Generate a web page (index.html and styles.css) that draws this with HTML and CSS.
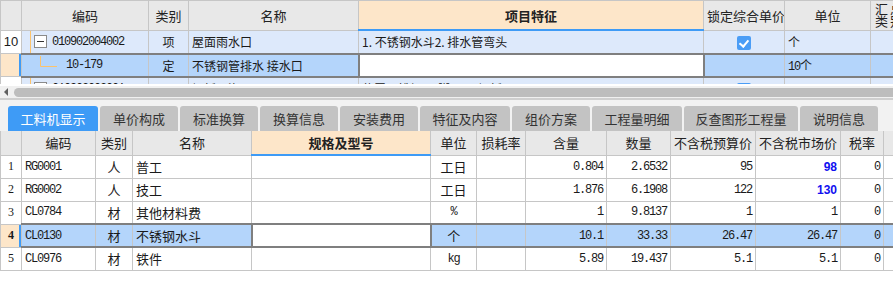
FILE: index.html
```html
<!DOCTYPE html>
<html lang="zh">
<head>
    <meta charset="UTF-8">
    <title>分部分项</title>
    <link rel="stylesheet" href="styles.css">
</head>
<body>

    <!-- 清单/定额表 -->
    <div class="top-grid">
        <table class="grid grid-top">
            <colgroup>
                <col style="width:21px"><col style="width:127px"><col style="width:40px"><col style="width:170px">
                <col style="width:345px"><col style="width:81px"><col style="width:86px"><col style="width:40px">
            </colgroup>
            <thead>
                <tr>
                    <th class="rn"></th>
                    <th>编码</th>
                    <th>类别</th>
                    <th>名称</th>
                    <th class="hl">项目特征</th>
                    <th>锁定综合单价</th>
                    <th>单位</th>
                    <th class="wrap">汇总类别</th>
                </tr>
            </thead>
            <tbody>
                <tr class="qd">
                    <td class="rn">10</td>
                    <td class="code">
                        <svg class="tree" width="28" height="22" viewBox="0 0 28 22">
                            <line x1="8.5" y1="0" x2="8.5" y2="22" stroke="#fcc36c"/>
                            <rect x="12.5" y="4.5" width="12" height="12" fill="#fff" stroke="#8a8a8a"/>
                            <line x1="15" y1="10.5" x2="22" y2="10.5" stroke="#333"/>
                        </svg><span class="mono">010902004002</span>
                    </td>
                    <td class="c">项</td>
                    <td>屋面雨水口</td>
                    <td>1. 不锈钢水斗2. 排水管弯头</td>
                    <td class="c"><span class="check"></span></td>
                    <td>个</td>
                    <td></td>
                </tr>
                <tr class="sel">
                    <td class="rn cur"></td>
                    <td class="code">
                        <svg class="tree" width="40" height="19" viewBox="0 0 40 19">
                            <polyline points="18.5,0 18.5,10.5 35,10.5" fill="none" stroke="#fcc36c"/>
                        </svg><span class="mono">10-179</span>
                    </td>
                    <td class="c">定</td>
                    <td>不锈钢管排水 接水口</td>
                    <td class="edit"></td>
                    <td></td>
                    <td><span class="mono">10</span>个</td>
                    <td></td>
                </tr>
                <tr class="qd">
                    <td class="rn">11</td>
                    <td class="code">
                        <svg class="tree" width="28" height="22" viewBox="0 0 28 22">
                            <line x1="8.5" y1="0" x2="8.5" y2="22" stroke="#fcc36c"/>
                            <rect x="12.5" y="4.5" width="12" height="12" fill="#fff" stroke="#8a8a8a"/>
                        </svg><span class="mono">010902003001</span>
                    </td>
                    <td class="c">项</td>
                    <td>钢板天沟</td>
                    <td>位置：排烟(正脚)：厚钢板</td>
                    <td class="c"><span class="check"></span></td>
                    <td>m</td>
                    <td></td>
                </tr>
            </tbody>
        </table>
    </div>

    <div class="hscroll">
        <span class="arrow"></span>
        <span class="thumb"></span>
    </div>

    <!-- 页签 -->
    <div class="tabs">
        <div class="tab active">工料机显示</div>
        <div class="tab">单价构成</div>
        <div class="tab">标准换算</div>
        <div class="tab">换算信息</div>
        <div class="tab">安装费用</div>
        <div class="tab w90">特征及内容</div>
        <div class="tab">组价方案</div>
        <div class="tab w90">工程量明细</div>
        <div class="tab w114">反查图形工程量</div>
        <div class="tab">说明信息</div>
    </div>

    <!-- 工料机表 -->
    <table class="grid grid-bottom">
        <colgroup>
            <col style="width:21px"><col style="width:74px"><col style="width:37px"><col style="width:119px">
            <col style="width:179px"><col style="width:46px"><col style="width:49px"><col style="width:81px">
            <col style="width:64px"><col style="width:85px"><col style="width:85px"><col style="width:43px">
            <col style="width:10px">
        </colgroup>
        <thead>
            <tr>
                <th class="rn"></th>
                <th>编码</th>
                <th>类别</th>
                <th>名称</th>
                <th class="hl">规格及型号</th>
                <th>单位</th>
                <th>损耗率</th>
                <th>含量</th>
                <th>数量</th>
                <th>不含税预算价</th>
                <th>不含税市场价</th>
                <th>税率</th>
                <th></th>
            </tr>
        </thead>
        <tbody>
            <tr>
                <td class="rn">1</td><td class="mono">RG0001</td><td class="c">人</td><td>普工</td><td></td>
                <td class="c">工日</td><td></td><td class="r mono">0.804</td><td class="r mono">2.6532</td>
                <td class="r mono">95</td><td class="r blue">98</td><td class="r mono">0</td><td></td>
            </tr>
            <tr>
                <td class="rn">2</td><td class="mono">RG0002</td><td class="c">人</td><td>技工</td><td></td>
                <td class="c">工日</td><td></td><td class="r mono">1.876</td><td class="r mono">6.1908</td>
                <td class="r mono">122</td><td class="r blue">130</td><td class="r mono">0</td><td></td>
            </tr>
            <tr>
                <td class="rn">3</td><td class="mono">CL0784</td><td class="c">材</td><td>其他材料费</td><td></td>
                <td class="c mono">%</td><td></td><td class="r mono">1</td><td class="r mono">9.8137</td>
                <td class="r mono">1</td><td class="r mono">1</td><td class="r mono">0</td><td></td>
            </tr>
            <tr class="sel">
                <td class="rn cur">4</td><td class="mono">CL0130</td><td class="c">材</td><td>不锈钢水斗</td><td class="edit"></td>
                <td class="c">个</td><td></td><td class="r mono">10.1</td><td class="r mono">33.33</td>
                <td class="r mono">26.47</td><td class="r mono">26.47</td><td class="r mono">0</td><td></td>
            </tr>
            <tr>
                <td class="rn">5</td><td class="mono">CL0976</td><td class="c">材</td><td>铁件</td><td></td>
                <td class="c mono">kg</td><td></td><td class="r mono">5.89</td><td class="r mono">19.437</td>
                <td class="r mono">5.1</td><td class="r mono">5.1</td><td class="r mono">0</td><td></td>
            </tr>
        </tbody>
    </table>

</body>
</html>
```

FILE: styles.css
```css
/* Reset */
* {
    margin: 0;
    padding: 0;
    box-sizing: border-box;
}

body {
    width: 893px;
    height: 282px;
    overflow: hidden;
    background-color: #fff;
    font-family: "Noto Sans CJK SC", "DejaVu Sans", sans-serif;
    font-size: 12px;
    color: #1a1a1a;
}

/* Tablas */
.grid {
    border-collapse: collapse;
    table-layout: fixed;
}

.grid th,
.grid td {
    border: 1px solid #c6c6c6;
    white-space: nowrap;
    overflow: hidden;
    padding: 0 3px;
    text-align: left;
    font-weight: normal;
}

.grid th {
    background-color: #e8e8e8;
    text-align: center;
    font-size: 13px;
    color: #222;
}

.grid th.hl {
    background-color: #fde6c9;
    font-weight: bold;
    border-bottom: 2px solid #3e9bf6;
}

.grid .rn {
    text-align: center;
    padding: 0;
}

.grid th.rn {
    background-color: #e8e8e8;
}

.grid td.rn.cur {
    background-color: #fde6c9;
    font-weight: bold;
    box-shadow: inset -2px 0 0 #3e9bf6;
}

.c { text-align: center !important; }
.r { text-align: right !important; }

.mono,
.grid td.mono {
    font-family: "Liberation Mono", monospace;
    font-size: 12px;
    letter-spacing: -1.2px;
}

.grid td.blue {
    color: #1010f0;
    font-weight: bold;
    font-family: "Liberation Sans", sans-serif;
    font-size: 12px;
}

/* Tabla superior */
.top-grid {
    height: 84px;
    overflow: hidden;
    border-top: 1px solid #c6c6c6;
}

.grid-top {
    width: 910px;
}

.grid-top th {
    height: 29px;
    font-size: 13px;
    border-top: none;
}

.grid-top th.wrap {
    white-space: normal;
    line-height: 12px;
    text-align: left;
    padding-left: 4px;
    letter-spacing: 2px;
}

.grid-top td {
    height: 23px;
    background-color: #dde9fb;
}

.grid-top td.rn {
    background-color: #fff;
    font-family: "Liberation Sans", sans-serif;
    font-size: 13px;
}

.grid-top td.code {
    padding: 0;
}

.tree {
    display: inline-block;
    vertical-align: top;
}

.grid-top td.code .mono {
    vertical-align: top;
    line-height: 22px;
    margin-left: 2px;
}

.grid-top tr.sel .code .mono {
    margin-left: 4px;
    line-height: 19px;
}

.grid tr.sel td {
    background-color: #b4d5fb;
    border-top: 2px solid #7f7f7f;
    border-bottom: 2px solid #7f7f7f;
}

.grid tr.sel td.rn {
    border-top: 1px solid #c6c6c6;
    border-bottom: 1px solid #c6c6c6;
}

.grid tr.sel td.edit {
    background-color: #fff;
    border-left: 2px solid #7f7f7f;
    border-right: 2px solid #7f7f7f;
}

.check {
    display: inline-block;
    width: 14px;
    height: 14px;
    border-radius: 2px;
    background-color: #4a9df6;
    position: relative;
    vertical-align: middle;
}

.check::after {
    content: "";
    position: absolute;
    left: 4px;
    top: 2px;
    width: 4px;
    height: 7px;
    border-right: 2px solid #fff;
    border-bottom: 2px solid #fff;
    transform: rotate(40deg);
}

/* Barra de desplazamiento */
.hscroll {
    height: 16px;
    background-color: #f0f0f0;
    border-top: 2px solid #fff;
    border-bottom: 2px solid #cfcfcf;
    display: flex;
    align-items: center;
    padding-left: 4px;
    gap: 6px;
}

.arrow {
    width: 0;
    height: 0;
    border-top: 4px solid transparent;
    border-bottom: 4px solid transparent;
    border-right: 4px solid #606060;
}

.thumb {
    flex-grow: 1;
    height: 9px;
    border-radius: 5px 0 0 5px;
    background-color: #bdbdbd;
}

/* Pestañas */
.tabs {
    display: flex;
    gap: 2px;
    height: 31px;
    padding: 6px 0 0 8px;
    background-color: #f2f2f2;
}

.tab {
    width: 78px;
    height: 25px;
    line-height: 25px;
    text-align: center;
    background-color: #c3c3c3;
    color: #333;
    font-size: 13px;
    border-radius: 3px 3px 0 0;
}

.tab.w90 { width: 90px; }
.tab.w114 { width: 114px; }

.tab.active {
    width: 90px;
    background-color: #3e9bf6;
    color: #fff;
}

/* Tabla inferior */
.grid-bottom {
    width: 893px;
}

.grid-bottom th {
    height: 24px;
    border-top: none;
}

.grid-bottom td {
    height: 23px;
    font-size: 13px;
}

.grid-bottom td.rn {
    font-family: "Liberation Serif", serif;
    font-size: 12px;
}
```
